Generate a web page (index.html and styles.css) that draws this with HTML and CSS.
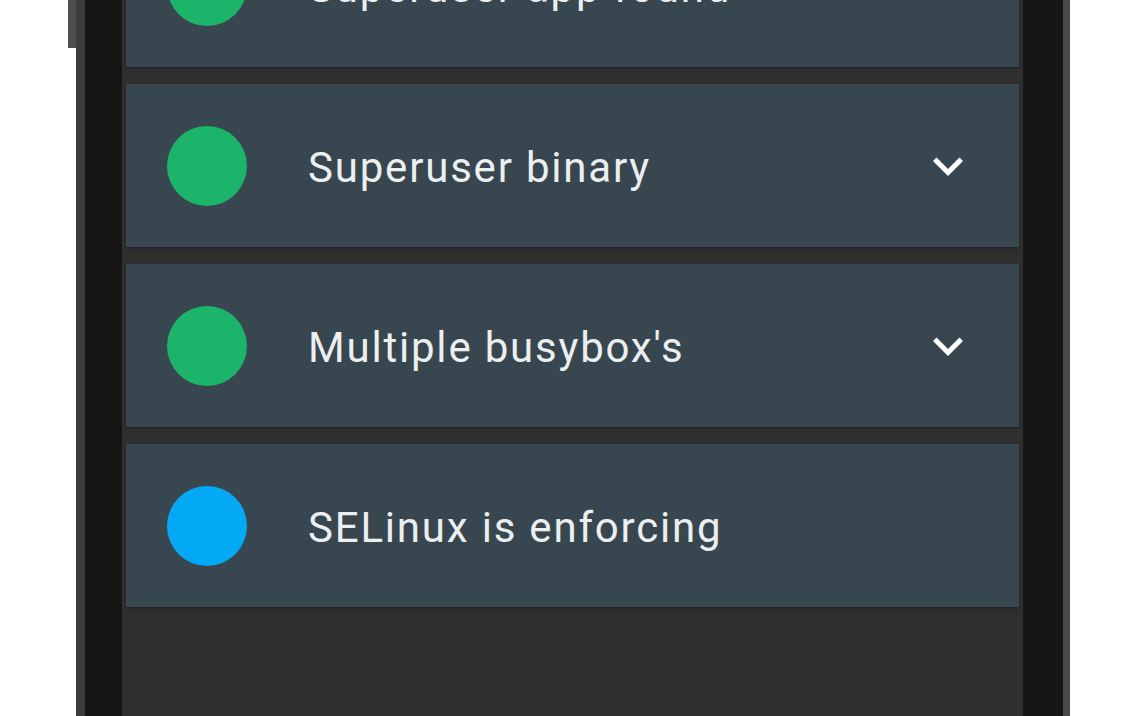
FILE: index.html
```html
<!DOCTYPE html>
<html lang="en">
<head>
  <meta charset="UTF-8">
  <meta name="viewport" content="width=device-width, initial-scale=1.0">
  <title>Root checker</title>
  <link rel="stylesheet" href="styles.css">
</head>
<body>

  <div class="phone">
    <div class="side-button"></div>
    <div class="screen">
      <div class="check-list">
        <div class="check-card">
          <div class="dot green"></div>
          <span class="label">Superuser app found</span>
        </div>
        <div class="check-card">
          <div class="dot green"></div>
          <span class="label">Superuser binary</span>
          <svg class="chevron" viewBox="0 0 24 24"><path d="M16.59 8.59L12 13.17 7.41 8.59 6 10l6 6 6-6z"/></svg>
        </div>
        <div class="check-card">
          <div class="dot green"></div>
          <span class="label">Multiple busybox's</span>
          <svg class="chevron" viewBox="0 0 24 24"><path d="M16.59 8.59L12 13.17 7.41 8.59 6 10l6 6 6-6z"/></svg>
        </div>
        <div class="check-card">
          <div class="dot blue"></div>
          <span class="label">SELinux is enforcing</span>
        </div>
      </div>
    </div>
  </div>

</body>
</html>
```

FILE: styles.css
```css
html, body {
  height: 100%;
}

body {
  margin: 0;
  background: #ffffff;
  font-family: Roboto, "Noto Sans", sans-serif;
  overflow: hidden;
}

.phone {
  position: relative;
  margin-left: 76px;
  width: 994px;
  height: 100%;
  box-sizing: border-box;
  display: flex;
  background: #161616;
  border-left: 9px solid #3b3b3b;
  border-right: 7px solid #4a4a4a;
  padding: 0 40px 0 37px;
}

/* volume key sticking out on the left */
.side-button {
  position: absolute;
  left: -17px;
  top: 0;
  width: 8px;
  height: 48px;
  background: #4e4e4e;
}

.screen {
  flex: 1;
  background: #2f2f2f;
  overflow: hidden;
}

.check-list {
  margin-top: -96px;
  padding: 0 4px;
  display: flex;
  flex-direction: column;
  gap: 17px;
}

.check-card {
  height: 163px;
  background: #38474f;
  display: flex;
  align-items: center;
  padding: 0 41px;
  box-shadow: 0 1px 2px rgba(0, 0, 0, 0.35);
}

.dot {
  width: 80px;
  height: 80px;
  border-radius: 50%;
  flex-shrink: 0;
}

.dot.green {
  background: #1cb46a;
}

.dot.blue {
  background: #04a9f5;
}

.label {
  flex: 1;
  margin-left: 61px;
  font-size: 42px;
  letter-spacing: 1.8px;
  color: #eceff0;
  margin-top: 4px;
}

.chevron {
  width: 60px;
  height: 60px;
  fill: #ffffff;
}
```
